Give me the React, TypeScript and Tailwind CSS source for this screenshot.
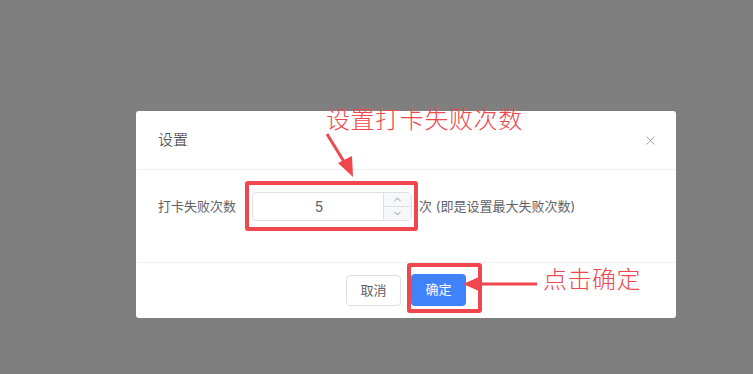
import { ChevronDown, ChevronUp, X } from "lucide-react";

const font = "font-['Inter','Noto_Sans_CJK_SC',sans-serif]";

const Dialog = () => {
    return (
        <div className={`w-[540px] h-[207px] bg-white rounded-[3px] flex flex-col ${font}`}>
            <div className="h-[59px] flex items-center justify-between pl-[22px] pr-[18px] border-b border-[#eef0f5]">
                <span className="text-[15px] font-light text-[#303133] pt-[1px]">设置</span>
                <X className="w-[15px] h-[15px] text-[#909399]" strokeWidth={1.3} />
            </div>
            <div className="h-[93px] flex items-start pt-[22px] pl-[22px] border-b border-[#eef0f5]">
                <span className="text-[13px] text-[#606266] mt-[5px] w-[94px]">打卡失败次数</span>
                <div className="w-[160px] h-[29px] border border-[#dcdfe6] rounded-[4px] flex overflow-hidden">
                    <div className="flex-1 flex items-center justify-center text-[14px] text-[#606266] pl-[2px]">5</div>
                    <div className="w-[28px] flex flex-col border-l border-[#dcdfe6] bg-[#f5f7fa]">
                        <div className="flex-1 flex items-center justify-center border-b border-[#dcdfe6]">
                            <ChevronUp className="w-[11px] h-[11px] text-[#606266]" strokeWidth={1.5} />
                        </div>
                        <div className="flex-1 flex items-center justify-center">
                            <ChevronDown className="w-[11px] h-[11px] text-[#606266]" strokeWidth={1.5} />
                        </div>
                    </div>
                </div>
                <span className="text-[13px] text-[#606266] mt-[5px] ml-[7px]">次 (即是设置最大失败次数)</span>
            </div>
            <div className="flex-1 flex items-start justify-end pt-[12px] pr-[210px] gap-[10px]">
                <button className="w-[55px] h-[31px] border border-[#dcdfe6] rounded-[4px] text-[13px] text-[#606266] bg-white">取消</button>
                <button className="w-[55px] h-[32px] -mt-[1px] rounded-[4px] text-[13px] text-white bg-[#3f82fc]">确定</button>
            </div>
        </div>
    );
};

export default function App() {
    return (
        <div className="relative w-[753px] h-[374px] bg-[#7f7f7f] overflow-hidden pt-[111px] pl-[136px]">
            <Dialog />

            {/* annotations */}
            <div className={`absolute left-[326px] top-[104px] text-[24px] leading-[32px] tracking-[0.6px] font-light text-[#f0474f] ${font}`}>设置打卡失败次数</div>
            <div className="absolute left-[245px] top-[181px] w-[173px] h-[50px] border-[4px] border-[#f0474f] rounded-[3px]" />
            <div className="absolute left-[407px] top-[263px] w-[75px] h-[50px] border-[4px] border-[#f0474f] rounded-[3px]" />
            <div className={`absolute left-[543px] top-[264px] text-[24px] leading-[32px] tracking-[0.5px] font-light text-[#f0474f] ${font}`}>点击确定</div>
            <svg className="absolute left-0 top-0" width="753" height="374">
                <line x1="327" y1="134" x2="346" y2="165" stroke="#f0474f" strokeWidth="3" />
                <polygon points="353,177 338,163 352,156" fill="#f0474f" />
                <line x1="537" y1="284" x2="475" y2="284" stroke="#f0474f" strokeWidth="3" />
                <polygon points="463,284 479,277 479,291" fill="#f0474f" />
            </svg>
        </div>
    );
}
